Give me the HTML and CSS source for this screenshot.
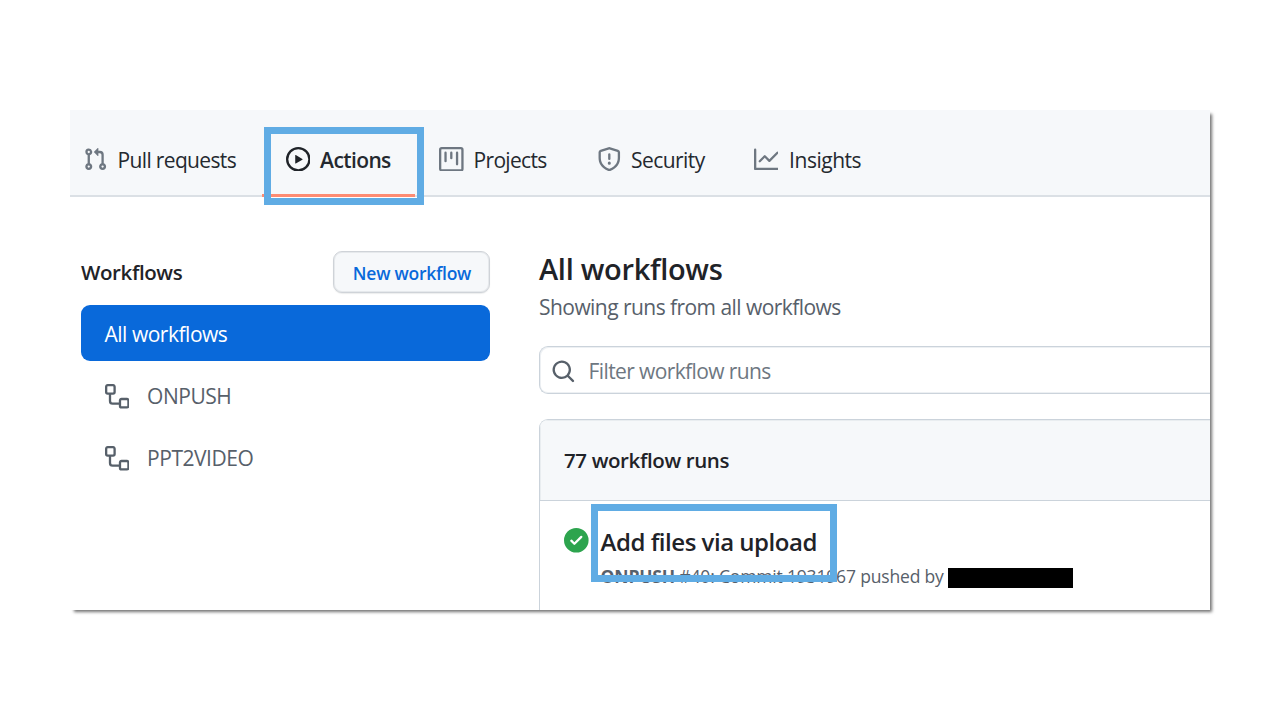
FILE: index.html
```html
<!DOCTYPE html>
<html lang="en">
<head>
<meta charset="utf-8">
<title>Actions</title>
<link rel="stylesheet" href="styles.css">
</head>
<body>
<main class="window">
  <nav class="tabs">
    <a class="tab"><svg class="icon" viewBox="0 0 16 16"><path d="M7.177 3.073L9.573.677A.25.25 0 0110 .854v4.792a.25.25 0 01-.427.177L7.177 3.427a.25.25 0 010-.354zM3.75 2.5a.75.75 0 100 1.5.75.75 0 000-1.5zm-2.25.75a2.25 2.25 0 113 2.122v5.256a2.251 2.251 0 11-1.5 0V5.372A2.25 2.25 0 011.5 3.25zM11 2.5h-1V4h1a1 1 0 011 1v5.628a2.251 2.251 0 101.5 0V5A2.5 2.5 0 0011 2.5zm1 10.25a.75.75 0 111.5 0 .75.75 0 01-1.5 0zM3.75 12a.75.75 0 100 1.5.75.75 0 000-1.5z"/></svg><span class="t-pull">Pull requests</span></a>
    <a class="tab active"><svg class="icon" viewBox="0 0 16 16"><path d="M1.5 8a6.5 6.5 0 1113 0 6.5 6.5 0 01-13 0zM8 0a8 8 0 100 16A8 8 0 008 0zM6.379 5.227A.25.25 0 006 5.442v5.117a.25.25 0 00.379.214l4.264-2.559a.25.25 0 000-.428L6.379 5.227z"/></svg><span class="t-actions">Actions</span></a>
    <a class="tab"><svg class="icon" viewBox="0 0 16 16"><path d="M1.75 0A1.75 1.75 0 000 1.75v12.5C0 15.216.784 16 1.75 16h12.5A1.75 1.75 0 0016 14.25V1.75A1.75 1.75 0 0014.25 0H1.75zM1.5 1.75a.25.25 0 01.25-.25h12.5a.25.25 0 01.25.25v12.5a.25.25 0 01-.25.25H1.75a.25.25 0 01-.25-.25V1.75zM11.75 3a.75.75 0 00-.75.75v7.5a.75.75 0 001.5 0v-7.5a.75.75 0 00-.75-.75zm-8.25.75a.75.75 0 011.5 0v5.5a.75.75 0 01-1.5 0v-5.5zM8 3a.75.75 0 00-.75.75v3.5a.75.75 0 001.5 0v-3.5A.75.75 0 008 3z"/></svg><span class="t-projects">Projects</span></a>
    <a class="tab"><svg class="icon" viewBox="0 0 16 16"><path d="M7.467.133a1.75 1.75 0 011.066 0l5.25 1.68A1.75 1.75 0 0115 3.48V7c0 1.566-.32 3.182-1.303 4.682-.983 1.498-2.585 2.813-5.032 3.855a1.7 1.7 0 01-1.33 0c-2.447-1.042-4.049-2.357-5.032-3.855C1.32 10.182 1 8.566 1 7V3.48a1.75 1.75 0 011.217-1.667l5.25-1.68zm.61 1.429a.25.25 0 00-.153 0l-5.25 1.68a.25.25 0 00-.174.238V7c0 1.358.275 2.666 1.057 3.86.784 1.194 2.121 2.34 4.366 3.297a.2.2 0 00.154 0c2.245-.956 3.582-2.104 4.366-3.298C13.225 9.666 13.5 8.36 13.5 7V3.48a.25.25 0 00-.174-.237l-5.25-1.68zM9 10.5a1 1 0 11-2 0 1 1 0 012 0zm-.25-5.75a.75.75 0 00-1.5 0v3a.75.75 0 001.5 0v-3z"/></svg><span class="t-security">Security</span></a>
    <a class="tab"><svg class="icon" viewBox="0 0 16 16"><path d="M1.5 1.75a.75.75 0 00-1.5 0v12.5c0 .414.336.75.75.75h14.5a.75.75 0 000-1.5H1.5V1.75zm14.28 2.53a.75.75 0 00-1.06-1.06L10 7.94 7.53 5.47a.75.75 0 00-1.06 0L3.22 8.72a.75.75 0 001.06 1.06L7 7.06l2.47 2.47a.75.75 0 001.06 0l5.25-5.25z"/></svg><span class="t-insights">Insights</span></a>
  </nav>
  <div class="content">
    <aside class="sidebar">
      <div class="side-head"><h2 class="side-title">Workflows</h2><button class="new-btn"><span class="t-new">New workflow</span></button></div>
      <a class="side-item selected"><span class="t-all">All workflows</span></a>
      <a class="side-item"><svg class="icon" viewBox="0 0 16 16"><path d="M0 1.75C0 .784.784 0 1.75 0h3.5C6.216 0 7 .784 7 1.75v3.5A1.75 1.75 0 015.25 7H4v4a1 1 0 001 1h4v-1.25C9 9.784 9.784 9 10.75 9h3.5c.966 0 1.75.784 1.75 1.75v3.5A1.75 1.75 0 0114.25 16h-3.5A1.75 1.75 0 019 14.25v-.75H5A2.5 2.5 0 012.5 11V7h-.75A1.75 1.75 0 010 5.25v-3.5zm1.75-.25a.25.25 0 00-.25.25v3.5c0 .138.112.25.25.25h3.5a.25.25 0 00.25-.25v-3.5a.25.25 0 00-.25-.25h-3.5zm9 9a.25.25 0 00-.25.25v3.5c0 .138.112.25.25.25h3.5a.25.25 0 00.25-.25v-3.5a.25.25 0 00-.25-.25h-3.5z"/></svg><span class="t-onpush">ONPUSH</span></a>
      <a class="side-item"><svg class="icon" viewBox="0 0 16 16"><path d="M0 1.75C0 .784.784 0 1.75 0h3.5C6.216 0 7 .784 7 1.75v3.5A1.75 1.75 0 015.25 7H4v4a1 1 0 001 1h4v-1.25C9 9.784 9.784 9 10.75 9h3.5c.966 0 1.75.784 1.75 1.75v3.5A1.75 1.75 0 0114.25 16h-3.5A1.75 1.75 0 019 14.25v-.75H5A2.5 2.5 0 012.5 11V7h-.75A1.75 1.75 0 010 5.25v-3.5zm1.75-.25a.25.25 0 00-.25.25v3.5c0 .138.112.25.25.25h3.5a.25.25 0 00.25-.25v-3.5a.25.25 0 00-.25-.25h-3.5zm9 9a.25.25 0 00-.25.25v3.5c0 .138.112.25.25.25h3.5a.25.25 0 00.25-.25v-3.5a.25.25 0 00-.25-.25h-3.5z"/></svg><span class="t-ppt">PPT2VIDEO</span></a>
    </aside>
    <section class="runs">
      <h1 class="title">All workflows</h1>
      <p class="subtitle">Showing runs from all workflows</p>
      <div class="filter"><svg class="icon" viewBox="0 0 16 16"><path fill-rule="evenodd" d="M11.5 7a4.499 4.499 0 11-8.998 0A4.499 4.499 0 0111.5 7zm-.82 4.74a6 6 0 111.06-1.06l3.04 3.04a.75.75 0 11-1.06 1.06l-3.04-3.04z"/></svg><span class="t-filter">Filter workflow runs</span></div>
      <div class="list">
        <div class="list-head"><span class="t-count">77 workflow runs</span></div>
        <div class="run">
          <svg class="icon ok" viewBox="0 0 16 16"><path fill-rule="evenodd" d="M8 16A8 8 0 108 0a8 8 0 000 16zm3.78-9.72a.75.75 0 00-1.06-1.06L6.75 9.19 5.28 7.72a.75.75 0 00-1.06 1.06l2 2a.75.75 0 001.06 0l4.5-4.5z"/></svg>
          <div class="run-text">
            <h3 class="run-title">Add files via upload</h3>
            <div class="run-meta"><span class="t-meta"><b>ONPUSH</b> #40: Commit 1931967 pushed by</span><span class="redacted"></span></div>
          </div>
        </div>
      </div>
    </section>
  </div>
  <div class="mark mark-tab"></div>
  <div class="mark mark-run"></div>
</main>
</body>
</html>
```
FILE: styles.css
```css
* { box-sizing: border-box; margin: 0; }
body { height: 720px; padding: 110px 70px; background: #fff; color: #1f2328; font: 21px/28px "Open Sans", "Noto Sans", sans-serif; overflow: hidden; }
.window { position: relative; width: 1140px; height: 500px; display: flex; flex-direction: column; background: #fff; box-shadow: 3px 3px 3px -1px rgba(0,0,0,.55); }
span, h1, h2, h3, p { white-space: nowrap; }
.icon { width: 24.6px; height: 24.6px; flex: none; fill: currentColor; }
.tabs { height: 87px; flex: none; display: grid; grid-template-columns: 202.5px 153.5px 157.5px 157px 1fr; padding: 13px 0 0 13px; background: #f6f8fa; border-bottom: 2px solid #dbe0e5; }
.tab { position: relative; display: flex; align-items: center; gap: 10px; color: #24292f; }
.tab .icon { color: #6e7781; }
.tab span { padding-top: 2px; }
.t-pull { letter-spacing: -.66px; }
.t-actions { letter-spacing: -.6px; }
.t-projects { letter-spacing: -.7px; }
.t-security { letter-spacing: -.58px; }
.t-insights { letter-spacing: -.48px; padding-left: 1px; }
.active { font-weight: 600; }
.tab.active .icon { color: #1f2328; }
.active::after { content: ""; position: absolute; left: -24px; width: 153px; bottom: -2px; height: 3px; background: #fd8c73; }
.content { flex: 1; min-height: 0; display: flex; gap: 49px; padding-left: 11px; overflow: hidden; }
.sidebar { width: 409px; flex: none; padding-top: 54px; }
.side-head { height: 42px; display: flex; align-items: center; justify-content: space-between; margin-bottom: 12px; }
.side-title { font-size: 20.5px; font-weight: 600; letter-spacing: -.4px; }
.new-btn { width: 157px; height: 42px; display: flex; align-items: center; justify-content: center; padding: 2px 0 0 1px; border: 1px solid #cfd3d8; border-radius: 9px; background: #f6f8fa; color: #0969da; font: 600 17.5px/24px "Open Sans", sans-serif; letter-spacing: -.25px; box-shadow: 0 1px 1px rgba(31,35,40,.08), inset 0 0 0 1px #e6e9ec; }
.side-item { height: 56px; display: flex; align-items: center; gap: 18px; padding: 2px 0 0 23.5px; margin-bottom: 6px; border-radius: 9px; color: #57606a; letter-spacing: -.48px; }
.side-item .icon { margin-top: 1px; }
.selected { background: #0969da; color: #fff; }
.runs { flex: 1; min-width: 0; padding-top: 53px; }
.title { font-size: 29px; line-height: 38px; font-weight: 600; letter-spacing: -.3px; }
.subtitle { margin-top: 5px; color: #57606a; letter-spacing: -.55px; }
.filter { height: 48px; margin-top: 25px; display: flex; align-items: center; gap: 13px; padding: 2px 0 0 11px; border: 1px solid #cbd3db; border-right: 0; border-radius: 9px 0 0 9px; color: #57606a; box-shadow: inset 1px 1px 0 #edf0f3, inset 0 -1px 0 #edf0f3; }
.t-filter { color: #6e7781; letter-spacing: -.62px; }
.list { margin-top: 25px; height: 240px; border: 1px solid #cbd3db; border-right: 0; border-radius: 9px 0 0 0; overflow: hidden; }
.list-head { height: 81px; display: flex; align-items: center; padding: 0 0 0 24px; background: #f6f8fa; border-bottom: 1px solid #cbd3db; font-weight: 600; box-shadow: inset 1px 1px 0 #e9edf0; }
.t-count { font-size: 20.5px; letter-spacing: -.38px; }
.run { display: flex; gap: 12px; padding: 27px 0 0 24px; }
.ok { color: #2da44e; }
.run-title { font-size: 24px; line-height: 32px; font-weight: 600; margin-top: -2px; letter-spacing: -.48px; }
.run-meta { display: flex; align-items: center; margin-top: 6px; color: #57606a; font-size: 17.5px; line-height: 24px; }
.t-meta { width: 347px; letter-spacing: -.17px; }
.redacted { width: 125px; height: 20px; margin-top: 4px; background: #000; }
.mark { position: absolute; border: 7px solid #60ace4; }
.mark-tab { left: 194px; top: 17px; width: 160px; height: 78px; }
.mark-run { left: 521px; top: 394px; width: 246px; height: 78px; }
```
